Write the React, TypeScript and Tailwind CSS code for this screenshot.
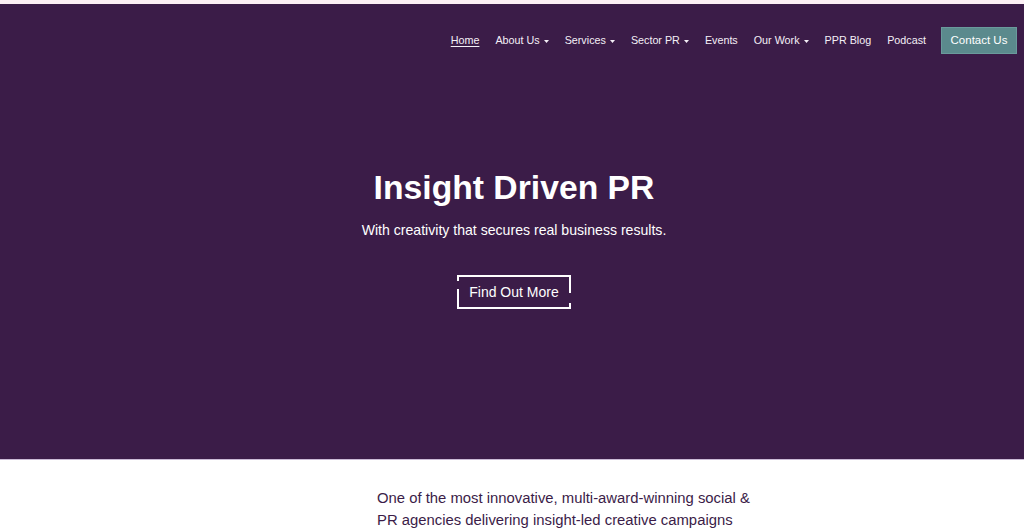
const navItems = [
  { label: "Home", caret: false, active: true },
  { label: "About Us", caret: true },
  { label: "Services", caret: true },
  { label: "Sector PR", caret: true },
  { label: "Events", caret: false },
  { label: "Our Work", caret: true },
  { label: "PPR Blog", caret: false },
  { label: "Podcast", caret: false },
];

function Caret() {
  return (
    <svg width="5" height="3" viewBox="0 0 5 3" className="ml-[4px] mt-[1px]">
      <path d="M0 0h5L2.5 3z" fill="currentColor" />
    </svg>
  );
}

export default function App() {
  return (
    <div className="min-h-[532px] bg-white" style={{ fontFamily: '"Liberation Sans", Arial, sans-serif' }}>
      <div className="h-[4px] bg-[#fcf0f5]" />

      <section className="h-[456px] bg-[#3b1c48] border-b border-[#cbbad6] flex flex-col">
        <nav className="flex justify-end items-center pt-[23px] pr-[7px] gap-[16px] text-[#f4eff6] text-[10.75px]">
          {navItems.map((item) => (
            <a
              key={item.label}
              href="#"
              className={`flex items-center whitespace-nowrap ${item.active ? "underline underline-offset-2" : ""}`}
            >
              {item.label}
              {item.caret && <Caret />}
            </a>
          ))}
          <a
            href="#"
            className="ml-[-1px] h-[27px] w-[76px] flex items-center justify-center bg-[#5b8a8d] text-white text-[11.5px] border border-[#6a9a9c]"
          >
            Contact Us
          </a>
        </nav>

        <div className="flex flex-col items-center mt-[113px] pl-[4px] text-white">
          <h1 className="text-[33.7px] leading-[41px] font-bold">Insight Driven PR</h1>
          <p className="mt-[12px] text-[14.1px] leading-[20px]">With creativity that secures real business results.</p>
          <a href="#" className="relative mt-[35px] w-[114px] h-[34px] flex items-center justify-center text-[14px]">
            Find Out More
            <span className="absolute left-0 right-0 top-0 h-[2px] bg-white" />
            <span className="absolute left-0 right-0 bottom-0 h-[2px] bg-white" />
            <span className="absolute left-0 top-0 w-[2px] h-[6px] bg-white" />
            <span className="absolute left-0 bottom-0 w-[2px] h-[20px] bg-white" />
            <span className="absolute right-0 top-0 w-[2px] h-[18px] bg-white" />
            <span className="absolute right-0 bottom-0 w-[2px] h-[6px] bg-white" />
          </a>
        </div>
      </section>

      <section className="pl-[377px] pt-[27px]">
        <p className="text-[14.85px] leading-[22px] text-[#3b1c48] w-[382px]">
          One of the most innovative, multi-award-winning social &amp; PR agencies delivering insight-led creative campaigns
        </p>
      </section>
    </div>
  );
}
